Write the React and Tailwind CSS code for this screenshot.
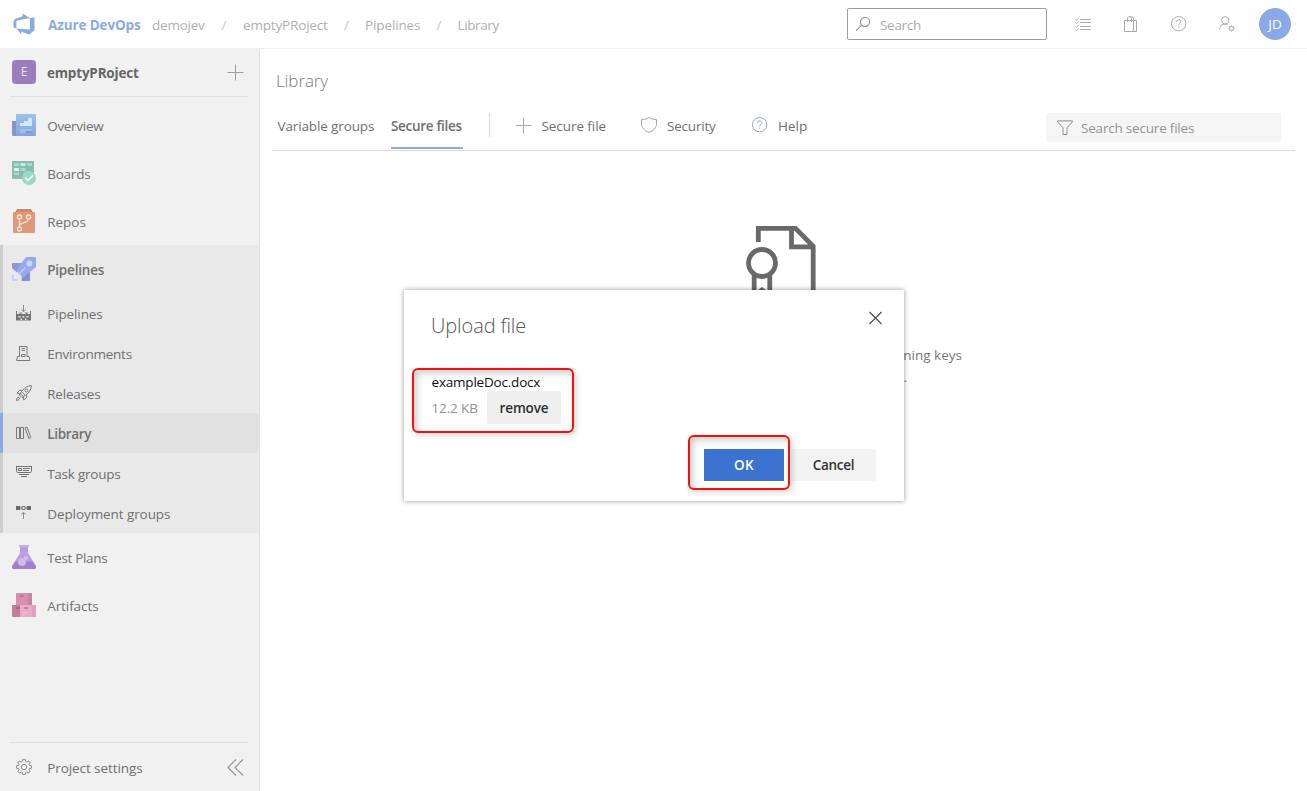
import React from "react";

/* ---------- Header icons ---------- */

const Logo = () => (
  <svg className="h-6 w-6" viewBox="0 0 16 16" fill="#8aaae4">
    <path d="M15 3.622v8.512L11.5 15l-5.425-1.975v1.958L3.004 10.97l8.951.7V4.005L15 3.622zm-2.984.428L6.994 1v2.001L2.382 4.356 1 6.13v4.029l1.978.873V5.869l9.038-1.818z" />
  </svg>
);

const SearchIcon = () => (
  <svg className="h-4 w-4" viewBox="0 0 16 16" fill="none" stroke="#8f8f8f" strokeWidth="1.1">
    <circle cx="10" cy="5.8" r="4.6" />
    <path d="M6.7 9.1 1 14.8" />
  </svg>
);

const TaskListIcon = () => (
  <svg className="h-4 w-4" viewBox="0 0 16 16" fill="none" stroke="#ababab" strokeWidth="1">
    <path d="M5 3.5h11M5 6.5h11M5 10.5h11M5 13.5h11" />
    <path d="M.5 3.3l1.2 1 2-2.3M.5 6.6l1.2 1 2-2.3M.5 10.2l1.2 1 2-2.3M.5 13.5l1.2 1 2-2.3" strokeWidth=".9" />
  </svg>
);

const BagIcon = () => (
  <svg className="h-4 w-4" viewBox="0 0 16 16" fill="none" stroke="#ababab" strokeWidth="1">
    <path d="M1.500 4.500h12v11h-12zM10.500 4.500v11" />
    <path d="M4.500 6V2.800C4.500 1.300 5.500.6 6.500.6S8.500 1.300 8.500 2.800V6M7 1.200C7.500.7 8 .6 8.500.6c1.300 0 2 .8 2 2.200V4.500" />
  </svg>
);

const HelpIcon = ({ stroke }) => (
  <svg className="h-4 w-4" viewBox="0 0 16 16" fill="none" stroke={stroke} strokeWidth="1">
    <circle cx="7.700" cy="7.700" r="7.200" />
    <path d="M5.600 6c0-1.300.9-2.100 2.100-2.100s2.100.8 2.100 1.900c0 1.700-2.100 1.600-2.100 3.500M7.700 10.500v1.200" />
  </svg>
);

const UserSettingsIcon = () => (
  <svg className="h-4 w-4" viewBox="0 0 16 16" fill="none" stroke="#ababab" strokeWidth="1">
    <circle cx="6.300" cy="4.300" r="3.700" />
    <path d="M.5 13.500C.7 10.400 3 8.100 6.200 8.100c1 0 1.800.2 2.500.6" />
    <circle cx="12.400" cy="12.400" r="2" />
    <path d="M12.400 9.200v1.200M12.400 14.400v1.200M9.200 12.400h1.200M14.400 12.400h1.200M10.100 10.100l.9.9M13.800 13.800l.9.9M10.100 14.700l.9-.9M13.800 11l.9-.9" />
  </svg>
);

/* ---------- Service icons ---------- */

const OverviewIcon = () => (
  <svg className="h-6 w-6" viewBox="0 0 24 24">
    <defs>
      <linearGradient id="ov" x1="0" y1="0" x2="0" y2="1">
        <stop offset="0" stopColor="#9dc1ec" />
        <stop offset="1" stopColor="#87a4e0" />
      </linearGradient>
    </defs>
    <path d="M0 8h4v15H1.200A1.200 1.200 0 0 1 0 21.800z" fill="#8299c8" />
    <path d="M4 1h19a1 1 0 0 1 1 1v20a1 1 0 0 1-1 1H4z" fill="url(#ov)" />
    <path d="M8 10h4V8h4V5h4v8H8z" fill="#d3e6fa" />
    <path d="M8 16h12v2h-6v2H8z" fill="#a5bde9" />
    <path d="M14 18h6v2h-6z" fill="#7f9bd8" />
  </svg>
);

const BoardsIcon = () => (
  <svg className="h-6 w-6" viewBox="0 0 24 24">
    <path d="M0 0h22v18H1a1 1 0 0 1-1-1z" fill="#8bbcae" />
    <path d="M2 2h5v3H2zM8.500 2h5v3h-5zM15 2h5v3h-5zM2 11.500h5v2.500H2zM8.500 7h5v3h-5z" fill="#a3dccb" />
    <path d="M2 7h5v3H2z" fill="#d0fbee" />
    <path d="M8.500 2h5v3h-5z" fill="#bcecdf" />
    <circle cx="17" cy="17" r="7" fill="#9bdac7" />
    <path d="M13.300 16.800l2.700 2.700 4.800-5" fill="none" stroke="#fff" strokeWidth="1.600" />
  </svg>
);

const ReposIcon = () => (
  <svg className="h-6 w-6" viewBox="0 0 24 24">
    <path d="M5 0h14l2 3.500H3z" fill="#cd8870" />
    <path d="M2 3h20a1 1 0 0 1 1 1v19a1 1 0 0 1-1 1H2a1 1 0 0 1-1-1V4a1 1 0 0 1 1-1z" fill="#e0987b" />
    <g fill="none" stroke="#fae5dc" strokeWidth="1.300">
      <circle cx="7.500" cy="8" r="2" />
      <circle cx="16.500" cy="8" r="2" />
      <circle cx="7.500" cy="20" r="2" />
      <path d="M7.500 10v8M7.500 16l2-1.500 5.500-1.800 1.500-2.700" />
    </g>
  </svg>
);

const PipelinesIcon = () => (
  <svg className="h-6 w-6" viewBox="0 0 24 24">
    <path d="M.8 6H11L5 15.500 1.500 12.500 0 11V6.800A.8.8 0 0 1 .8 6z" fill="#8a98d8" />
    <path d="M18 12v11a1 1 0 0 1-1 1H9.500v-4z" fill="#8490d6" />
    <path d="M14 0h9a1 1 0 0 1 1 1v9L11 20.500 4 13.500z" fill="#99a9ee" />
    <circle cx="17.500" cy="6.500" r="2.900" fill="#cbd6f8" />
    <path d="M13.500 10.500L6.500 17.500" stroke="#c5d0f6" strokeWidth="1.300" />
    <path d="M3.500 14.200l6.500 6.500-1.300 1.300-6.500-6.500z" fill="#e3e8f8" />
    <path d="M0 18h2v4h4v2H0z" fill="#c3cff8" />
  </svg>
);

const TestPlansIcon = () => (
  <svg className="h-6 w-6" viewBox="0 0 24 24">
    <path d="M8 1h8v7l7.600 12.800A2 2 0 0 1 22 24H2A2 2 0 0 1 .4 20.800L8 8z" fill="#bb9fe0" />
    <path d="M3.200 16.500h17.600l2.800 4.300A2 2 0 0 1 22 24H2A2 2 0 0 1 .4 20.800z" fill="#a27fcf" />
    <path d="M7 0h10v2H7z" fill="#c9b0ea" />
    <circle cx="10" cy="17" r="4" fill="#cfb9ee" />
    <circle cx="14" cy="13" r="2.200" fill="#cfb9ee" />
  </svg>
);

const ArtifactsIcon = () => (
  <svg className="h-6 w-6" viewBox="0 0 24 24">
    <path d="M5 0h14a1 1 0 0 1 1 1v11H4V1a1 1 0 0 1 1-1z" fill="#d68fae" />
    <path d="M16 0h3a1 1 0 0 1 1 1v11h-4z" fill="#cb83a2" />
    <path d="M0 12h8v12H1a1 1 0 0 1-1-1z" fill="#c37f99" />
    <path d="M8 12h16v11a1 1 0 0 1-1 1H8z" fill="#e8adc6" />
    <path d="M20 12h4v11a1 1 0 0 1-1 1h-3z" fill="#e0a0bd" />
    <path d="M8 2h4v2H8z" fill="#c47795" />
    <path d="M4 14h4v2H4z" fill="#ad6582" />
    <path d="M12 14h4v2h-4z" fill="#cf7fa0" />
    <path d="M10 19h6v1h-6zM10 21h3v1h-3z" fill="#f0c3d6" />
  </svg>
);

/* ---------- Pipeline section icons ---------- */

const BuildIcon = () => (
  <svg className="h-4 w-4" viewBox="0 0 16 16" fill="none" stroke="#7a7a7a" strokeWidth="1">
    <path d="M7.500 0v6.500M5.300 4.500l2.200 2.200 2.200-2.200" stroke="#8a8a8a" />
    <path d="M.5 6v9M14.500 6v9" />
    <path d="M0 9h15v6.500H0z" fill="#757575" stroke="none" />
    <path d="M3 7.500l2 2M12 7.500l-2 2M5 7v2M10 7v2" />
    <path d="M2.500 11h2v1.500h-2zM6.500 11h2v1.500h-2zM10.500 11h2v1.500h-2zM4.500 13.500H6V15H4.500zM9 13.500h1.500V15H9z" fill="#eaeaea" stroke="none" />
  </svg>
);

const EnvironmentIcon = () => (
  <svg className="h-4 w-4" viewBox="0 0 16 16" fill="none" stroke="#7a7a7a" strokeWidth="1">
    <path d="M3.500 12V1.500h7.500V12M5.500 3.500H9M5.500 5.500H9M5.500 9.500H9v2H5.500zM3.500 11.500h-2L.6 15.500h13.300l-.9-4h-2" />
  </svg>
);

const RocketIcon = () => (
  <svg className="h-4 w-4" viewBox="0 0 16 16" fill="none" stroke="#7a7a7a" strokeWidth="1">
    <path d="M15.300.6C11.500.7 8 2.800 4.200 8.500l3.200 3.200C12.500 8.500 15 5.500 15.300.6z" />
    <circle cx="10.400" cy="5.500" r="1.500" />
    <path d="M6.500 5.300l-3-.1L1 8.200l3.200.3M10.600 9.400l.1 3L7.700 15l-.3-3.300M4.200 8.500l-.9 1.400 2.700 2.700 1.400-.9M5.800 7l3 3" />
    <path d="M3 12.500c-1.500-.6-2.300.6-2.500 2.900 2.100 0 3.300-.9 2.500-2.900z" />
  </svg>
);

const LibraryIcon = () => (
  <svg className="h-4 w-4" viewBox="0 0 16 16" fill="none" stroke="#7a7a7a" strokeWidth="1">
    <path d="M.5 2.500h3v11h-3zM4.500 2.500h3v11h-3zM9 2.800l2-.7 3.800 10.500-2 .8z" />
  </svg>
);

const TaskGroupIcon = () => (
  <svg className="h-4 w-4" viewBox="0 0 16 16" fill="none" stroke="#727272" strokeWidth="1">
    <path d="M0 1.500h16M.5 1v5c0 1 .5 1.500 1.500 1.500h12c1 0 1.500-.5 1.500-1.500V1M2.500 3.500h3v2h-3zM7 3.500h7M7 5.500h6M3 9.500h10M5 11.500h6" />
  </svg>
);

const DeploymentIcon = () => (
  <svg className="h-4 w-4" viewBox="0 0 16 16" fill="none" stroke="#727272" strokeWidth="1">
    <path d="M0 1h4.200v4H0zM10.800 1H15v4h-4.200z" fill="#6a6a6a" stroke="none" />
    <path d="M6 1.500h3v3H6zM4.200 3H6M9 3h2" />
    <path d="M7.500 7.500V14M5.300 9.500l2.200-2.200 2.200 2.200" stroke="#8a8a8a" />
  </svg>
);

const GearIcon = () => (
  <svg className="h-4 w-4" viewBox="0 0 16 16" fill="none" stroke="#8a8a8a" strokeWidth="1" strokeLinejoin="round">
    <circle cx="8" cy="8" r="2.700" />
    <path d="M6.700.6h2.600l.4 2 .9.4 1.700-1.200 1.900 1.900L13 5.400l.4.9 2 .4v2.600l-2 .4-.4.9 1.200 1.700-1.900 1.900-1.700-1.200-.9.4-.4 2H6.700l-.4-2-.9-.4-1.700 1.200-1.900-1.900L3 10.600l-.4-.9-2-.4V6.700l2-.4.4-.9-1.200-1.700 1.900-1.900L5.400 3l.9-.4z" />
  </svg>
);

/* ---------- Page icons ---------- */

const PlusIcon = ({ stroke }) => (
  <svg className="h-[17px] w-[17px]" viewBox="0 0 17 17" fill="none" stroke={stroke} strokeWidth="1">
    <path d="M8.500.5v16M.5 8.500h16" />
  </svg>
);

const ShieldIcon = () => (
  <svg className="h-4 w-4" viewBox="0 0 16 16" fill="none" stroke="#9a9fc4" strokeWidth="1">
    <path d="M8 .6c2.200 1.300 4.600 1.900 7.500 2v4.200c0 4-2.700 6.700-7.500 8.600C3.200 13.500.5 10.800.5 6.800V2.600C3.400 2.500 5.800 1.900 8 .6z" />
  </svg>
);

const FilterIcon = () => (
  <svg className="h-4 w-4" viewBox="0 0 16 16" fill="none" stroke="#8d8d8d" strokeWidth="1">
    <path d="M.5.900h15v.8L10 7.700v6.800H6V7.700L.5 1.700z" />
  </svg>
);

const CollapseIcon = () => (
  <svg className="h-[17px] w-[17px]" viewBox="0 0 17 17" fill="none" stroke="#8f968f" strokeWidth="1.100">
    <path d="M9 .5l-8 8 8 8M16 .5l-8 8 8 8" />
  </svg>
);

const CertificateArt = () => (
  <svg className="h-20 w-[72px]" viewBox="0 0 72 80" fill="none" stroke="#696969" strokeWidth="4.800">
    <path d="M13.300 17V3.400H50.500L68.200 21.200V78H40" />
    <path d="M46.500 3v18.800h22" />
    <circle cx="17" cy="38" r="13.500" />
    <path d="M9.200 49v29l7.800-8 7.800 8V49" />
    <path d="M13 65l4-3 4 3v4h-8z" fill="#696969" stroke="none" />
  </svg>
);

/* ---------- Data ---------- */

const crumbs = [
  { label: "demojev", className: "w-[69.500px] tracking-[-0.23px]" },
  { label: "/", className: "w-[21.500px] text-[#c6c6c6]" },
  { label: "emptyPRoject", className: "w-[101px] tracking-[-0.17px]" },
  { label: "/", className: "w-[21px] text-[#c6c6c6]" },
  { label: "Pipelines", className: "w-[71.500px] tracking-[-0.12px]" },
  { label: "/", className: "w-[21px] text-[#c6c6c6]" },
  { label: "Library", className: "tracking-[-0.38px]" },
];

const pipelineItems = [
  { label: "Pipelines", Icon: BuildIcon, className: "tracking-[-0.12px]" },
  { label: "Environments", Icon: EnvironmentIcon, className: "tracking-[-0.23px]" },
  { label: "Releases", Icon: RocketIcon, className: "tracking-[-0.2px]" },
  { label: "Library", Icon: LibraryIcon, className: "font-semibold tracking-[-0.33px]", selected: true },
  { label: "Task groups", Icon: TaskGroupIcon, className: "tracking-[-0.25px]" },
  { label: "Deployment groups", Icon: DeploymentIcon, className: "tracking-[-0.08px]" },
];

/* ---------- Building blocks ---------- */

const ServiceRow = ({ Icon, label, className }) => (
  <a className="flex h-12 items-center pl-3">
    <Icon />
    <span className={"ml-[11.200px] pt-0.5 " + className}>{label}</span>
  </a>
);

const SubRow = ({ Icon, label, className, selected }) => (
  <a
    className={
      selected
        ? "-ml-[3px] flex h-10 items-center rounded-r-sm border-l-[3px] border-[#8aaae4] bg-[#e1e1e1] pl-[13px]"
        : "flex h-10 items-center pl-[13px]"
    }
  >
    <Icon />
    <span className={"ml-[15.200px] pt-0.5 " + className}>{label}</span>
  </a>
);

const Header = () => (
  <header className="flex h-[49px] shrink-0 items-center border-b border-[#f0f0f0] pr-4">
    <div className="flex w-12 items-center pl-3">
      <Logo />
    </div>
    <span className="w-[104px] pt-0.5 font-bold tracking-[-0.12px] text-[#8aaae4]">Azure DevOps</span>
    <nav className="flex flex-1 items-center pt-0.5 text-[#b0b0b0]">
      {crumbs.map((c, i) => (
        <span key={i} className={c.className}>
          {c.label}
        </span>
      ))}
    </nav>
    <div className="flex h-8 w-[200px] items-center rounded-[2px] border border-[#9c9c9c] pl-[7px]">
      <SearchIcon />
      <span className="ml-[9px] pt-px tracking-[-0.3px] text-[#ababab]">Search</span>
    </div>
    <div className="ml-7 flex items-center gap-8">
      <TaskListIcon />
      <BagIcon />
      <HelpIcon stroke="#ababab" />
      <UserSettingsIcon />
    </div>
    <div className="ml-6 flex h-8 w-8 items-center justify-center rounded-full bg-[#8ba9e8] text-[13.5px] text-white">JD</div>
  </header>
);

const Sidebar = () => (
  <aside className="flex w-[260px] shrink-0 flex-col border-r border-[#dfdfdf] bg-[#f1f1f1] text-[#707070]">
    <div className="mb-px flex h-[46px] items-center pl-3">
      <div className="flex h-6 w-6 items-center justify-center rounded bg-[#9b7fbb] text-[12px] text-[#ebe4f2]">E</div>
      <span className="ml-[11px] pt-0.5 font-bold tracking-[-0.19px] text-[#666]">emptyPRoject</span>
      <span className="mr-[15px] ml-auto">
        <PlusIcon stroke="#96a096" />
      </span>
    </div>
    <div className="mr-[11px] mb-1 ml-2.5 h-px bg-[#e0e0e0]" />
    <ServiceRow Icon={OverviewIcon} label="Overview" className="tracking-[-0.3px]" />
    <ServiceRow Icon={BoardsIcon} label="Boards" className="tracking-[-0.22px]" />
    <ServiceRow Icon={ReposIcon} label="Repos" className="tracking-normal" />
    <div className="border-l-[3px] border-[#cecece] bg-[#e9e9e9]">
      <div className="-ml-[3px]">
        <ServiceRow Icon={PipelinesIcon} label="Pipelines" className="font-semibold tracking-[-0.2px]" />
      </div>
      {pipelineItems.map((item) => (
        <SubRow key={item.label} {...item} />
      ))}
    </div>
    <ServiceRow Icon={TestPlansIcon} label="Test Plans" className="tracking-[-0.34px]" />
    <ServiceRow Icon={ArtifactsIcon} label="Artifacts" className="tracking-[-0.08px]" />
    <div className="mt-auto mr-[11px] ml-2.5 h-px bg-[#e0e0e0]" />
    <div className="flex h-12 items-center pl-4">
      <GearIcon />
      <span className="ml-[15.200px] pt-0.5 tracking-[-0.08px]">Project settings</span>
      <span className="mr-[15px] ml-auto">
        <CollapseIcon />
      </span>
    </div>
  </aside>
);

const Toolbar = () => (
  <div className="mr-3 ml-3 flex h-[50px] items-start border-b border-[#dcdcdc] text-[#707070]">
    <span className="ml-[5.500px] w-[113.500px] pt-[15px] tracking-[-0.13px]">Variable groups</span>
    <span className="h-12 w-[72px] border-b-2 border-[#8aaae4] pt-[15px] font-semibold tracking-[-0.3px] whitespace-nowrap">
      Secure files
    </span>
    <span className="mt-3 ml-[26px] h-6 w-px bg-[#dcdcdc]" />
    <span className="ml-[25px] flex w-[126px] items-center pt-[15px]">
      <span className="-mt-[2px]">
        <PlusIcon stroke="#a9a6c0" />
      </span>
      <span className="ml-[9.500px] tracking-[-0.07px]">Secure file</span>
    </span>
    <span className="flex w-[111px] items-center pt-[15px]">
      <span className="-mt-[3px]">
        <ShieldIcon />
      </span>
      <span className="ml-2.5 tracking-[-0.21px]">Security</span>
    </span>
    <span className="flex items-center pt-[15px]">
      <span className="-mt-[3px]">
        <HelpIcon stroke="#9a9fc4" />
      </span>
      <span className="ml-2.5">Help</span>
    </span>
    <div className="mt-3 mr-3.5 ml-auto flex h-[29px] w-[235px] items-center rounded-[2px] bg-[#f5f5f5] pl-[11px]">
      <FilterIcon />
      <span className="ml-2 tracking-[-0.2px] text-[#949494]">Search secure files</span>
    </div>
  </div>
);

const UploadDialog = () => (
  <div
    role="dialog"
    className="absolute top-[290px] left-[404px] flex h-[211px] w-[500px] flex-col bg-white shadow-[0_0_5px_rgba(0,0,0,0.42)]"
  >
    <div className="flex items-start justify-between pr-[22px] pl-[27px]">
      <h2 className="pt-[22px] text-[20px] leading-7 font-light tracking-[-0.1px] text-[#555]">Upload file</h2>
      <svg className="mt-[21px] h-[14px] w-[14px]" viewBox="0 0 14 14" fill="none" stroke="#4a4a4a" strokeWidth="1.100">
        <path d="M1.500 1l12 12M13.500 1L1.500 13" />
      </svg>
    </div>
    <div className="relative mt-[33px] flex flex-col pl-[27.500px]">
      <span className="h-[18px] leading-[18px] tracking-[-0.2px] text-[#111]">exampleDoc.docx</span>
      <div className="flex items-center">
        <span className="w-[55.500px] tracking-[-0.12px] text-[#929292]">12.2 KB</span>
        <button className="h-[33px] w-[74px] rounded-[2px] bg-[#efefef] font-semibold tracking-[-0.15px] text-[#2f2f2f]">
          remove
        </button>
      </div>
      <div className="pointer-events-none absolute -top-[5px] left-[7.500px] h-[65px] w-[162px] rounded-md border-2 border-[#f41010] shadow-[2px_2px_6px_rgba(0,0,0,0.18),inset_3px_3px_7px_rgba(0,0,0,0.2)]" />
    </div>
    <div className="relative mt-auto mr-7 mb-5 flex items-center justify-end gap-[7px]">
      <button className="h-8 w-20 bg-[#3c73d1] font-semibold tracking-[0.3px] text-white">OK</button>
      <button className="h-8 w-[85px] rounded-[2px] bg-[#f3f3f3] font-semibold tracking-[-0.28px] text-[#333]">
        Cancel
      </button>
      <div className="pointer-events-none absolute -top-[14px] right-[86.500px] h-[55px] w-[102px] rounded-md border-2 border-[#f41010] shadow-[2px_2px_6px_rgba(0,0,0,0.18),inset_3px_3px_7px_rgba(0,0,0,0.2)]" />
    </div>
  </div>
);

export default function App() {
  return (
    <div className="relative flex h-[791px] w-[1307px] flex-col overflow-hidden bg-white font-['Open_Sans','Noto_Sans',sans-serif] text-[13.5px] leading-5">
      <Header />
      <div className="flex min-h-0 flex-1">
        <Sidebar />
        <main className="flex flex-1 flex-col">
          <h1 className="h-[52px] pt-5 pl-4 text-[17px] leading-6 font-light tracking-[-0.1px] text-[#7a7a7a]">Library</h1>
          <Toolbar />
          <div className="flex flex-col">
            <div className="mt-[74px] ml-[485px]">
              <CertificateArt />
            </div>
            <p className="mt-10 flex w-[702px] flex-col text-right text-[#777]">
              <span>signing keys</span>
            </p>
            <p className="mt-0.5 w-[647px] text-right text-[#777]">.</p>
          </div>
        </main>
      </div>
      <UploadDialog />
    </div>
  );
}
